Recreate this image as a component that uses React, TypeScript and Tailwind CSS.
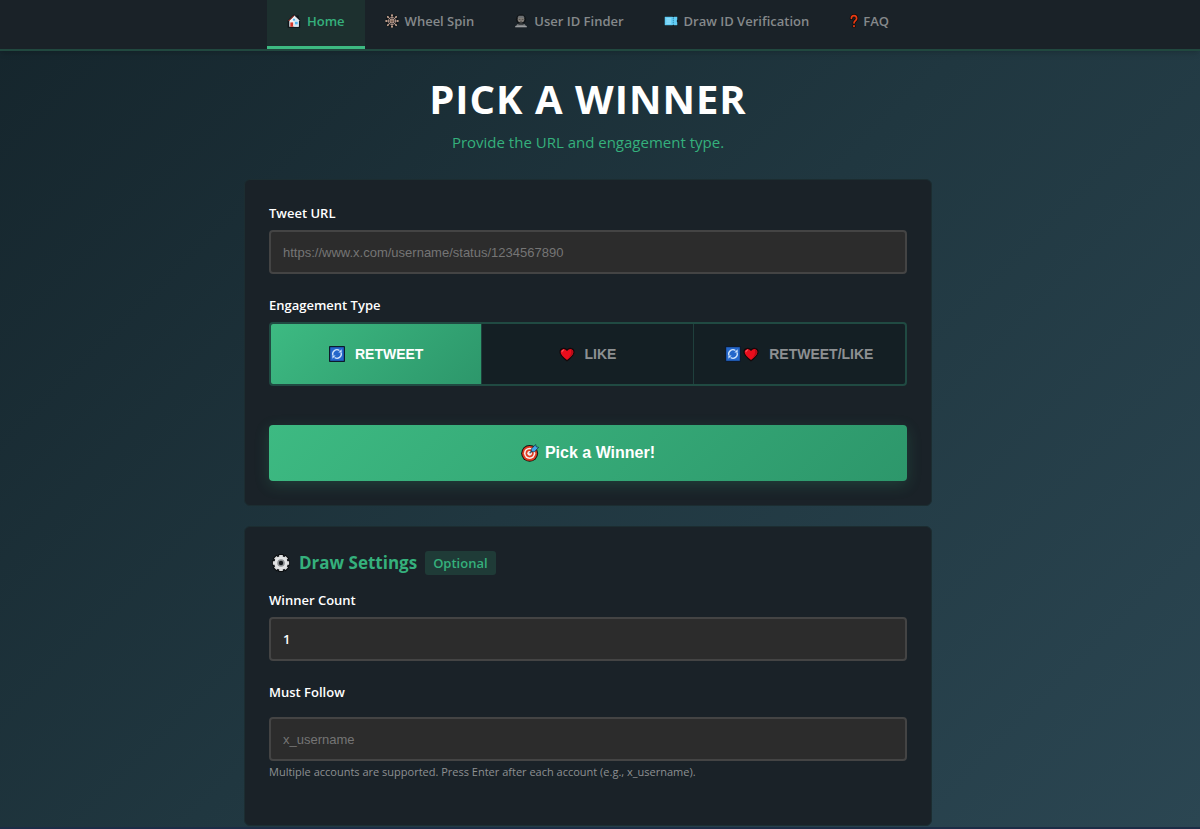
import { useState, type ReactNode } from 'react';
import clsx from 'clsx';

type IconProps = { className?: string };
type Engagement = 'retweet' | 'like' | 'both';

function HouseIcon({ className }: IconProps) {
  return (
    <svg viewBox="0 0 16 16" className={className} aria-hidden="true">
      <path d="M8 .2 .8 7.4V15.6H15V6.4L13.4 4.6V1.6H10.6V2.8Z" fill="#10151a" />
      <path d="M8 2.6 2.6 7.8V14.6H13.4V7.6Z" fill="#eef1f4" />
      <path d="M8.2 8.4 10.6 5l2.8 2.6v7H8.2Z" fill="#d5e5f1" />
      <path d="M8 2.2 14 7.8" stroke="#f3f5f7" strokeWidth="1.2" />
      <path d="M1.8 8 8 1.8" stroke="#c53a2e" strokeWidth="1.1" />
      <rect x="3.8" y="9.6" width="3.2" height="5" fill="#d3372b" />
      <rect x="9.2" y="9" width="3" height="2.8" fill="#4fb3ee" />
      <rect x="6.8" y="5.4" width="2.4" height="2.2" fill="#4fb3ee" />
    </svg>
  );
}

function WheelIcon({ className }: IconProps) {
  return (
    <svg viewBox="0 0 16 16" className={className} aria-hidden="true">
      <circle cx="8" cy="8" r="7.6" fill="#14181b" />
      <g stroke="#b3968a" strokeWidth="1.1" fill="none">
        <circle cx="8" cy="8" r="4.2" strokeWidth="1" />
        <path d="M8 1v14M1 8h14M3 3l10 10M13 3 3 13" />
      </g>
      <g fill="#c9a893">
        <circle cx="8" cy="1.4" r="1.1" />
        <circle cx="8" cy="14.6" r="1.1" />
        <circle cx="1.4" cy="8" r="1.1" />
        <circle cx="14.6" cy="8" r="1.1" />
        <circle cx="3.3" cy="3.3" r="1.1" />
        <circle cx="12.7" cy="3.3" r="1.1" />
        <circle cx="3.3" cy="12.7" r="1.1" />
        <circle cx="12.7" cy="12.7" r="1.1" />
        <circle cx="8" cy="8" r="2" />
      </g>
      <circle cx="8" cy="8" r="1" fill="#4a352b" />
    </svg>
  );
}

function DetectiveIcon({ className }: IconProps) {
  return (
    <svg viewBox="0 0 16 16" className={className} aria-hidden="true">
      <circle cx="8" cy="6" r="5.8" fill="#111518" />
      <path d="M2.4 14.6c0-2.8 2-3.8 5.6-3.8s5.6 1 5.6 3.8Z" fill="#7d8082" />
      <circle cx="8" cy="6" r="3.8" fill="#827e79" />
      <path d="M4 4.6h8L10.6 2H5.4Z" fill="#6d7072" />
      <path d="M5.4 6.2h2M8.8 6.2h2M7 8.4h2" stroke="#4b4a48" strokeWidth="1" />
      <path d="M5 11.6h6" stroke="#202426" strokeWidth="1.2" />
      <path d="M1.4 14.4h13.2" stroke="#9a9d9f" strokeWidth="1.6" />
    </svg>
  );
}

function TicketIcon({ className }: IconProps) {
  return (
    <svg viewBox="0 0 16 16" className={className} aria-hidden="true">
      <rect x="0" y="2.4" width="16" height="11.2" rx="1" fill="#12181c" />
      <path d="M.8 3.2h9l.8.8.8-.8h3.8v3.2l-.7 1.6.7 1.6v3.2h-3.8l-.8-.8-.8.8h-9Z" fill="#62cdf5" />
      <path d="M2.6 5.6h5.4M2.6 8h5.4M2.6 10.4h5.4" stroke="#a9e6fb" strokeWidth="1" />
      <path d="M10.6 4.6v7" stroke="#277ca1" strokeDasharray="1.4 .8" />
    </svg>
  );
}

function QuestionIcon({ className }: IconProps) {
  return (
    <svg viewBox="0 0 10 16" className={className} aria-hidden="true">
      <g fill="none" strokeLinecap="round">
        <path d="M2 5C2 .9 8 .9 8 5 8 7.4 5 7.6 5 10.4" stroke="#0f0d0d" strokeWidth="3.8" />
        <path d="M5 13.8v.1" stroke="#0f0d0d" strokeWidth="3.8" />
        <path d="M2 5C2 .9 8 .9 8 5 8 7.4 5 7.6 5 10.4" stroke="#ea3a12" strokeWidth="1.9" />
        <path d="M5 13.8v.1" stroke="#ea3a12" strokeWidth="2.2" />
      </g>
    </svg>
  );
}

function RepeatIcon({ className }: IconProps) {
  return (
    <svg viewBox="0 0 16 16" className={className} aria-hidden="true">
      <rect width="16" height="16" rx=".8" fill="#0d1a2c" />
      <rect x="1.2" y="1.2" width="13.6" height="13.6" fill="#2467cb" />
      <g stroke="#cfe4fb" strokeWidth="1.3" fill="none">
        <path d="M3.9 9.4A4.3 4.3 0 0 1 10.4 4.5" />
        <path d="M12.1 6.6A4.3 4.3 0 0 1 5.6 11.5" />
      </g>
      <path d="M9.4 6.4h3.2V3.2Z" fill="#cfe4fb" />
      <path d="M6.6 9.6H3.4v3.2Z" fill="#cfe4fb" />
    </svg>
  );
}

function HeartIcon({ className }: IconProps) {
  return (
    <svg viewBox="0 0 16 16" className={className} aria-hidden="true">
      <path
        d="M8 14.8C4.6 12.2 1 9.4 1 6 1 2 6 1.4 8 4.2c2-2.8 7-2.2 7 1.8 0 3.4-3.6 6.2-7 8.8Z"
        fill="#ea0d1c"
        stroke="#14080a"
        strokeWidth="1.2"
      />
      <path d="M8 13.8c3-2.3 6.2-4.9 6.2-7.8 0-1.7-1.2-2.6-2.4-2.7C13 7.4 11 11 8 13.8Z" fill="#b80c18" />
      <path d="M3 5.8c0-1.2.8-1.8 1.7-1.8" stroke="#ff6b72" strokeWidth="1" fill="none" strokeLinecap="round" />
    </svg>
  );
}

function TargetIcon({ className }: IconProps) {
  return (
    <svg viewBox="0 0 20 20" className={className} aria-hidden="true">
      <circle cx="9.6" cy="10.4" r="9.4" fill="#171010" />
      <circle cx="9.6" cy="10.4" r="8.3" fill="#df3d22" />
      <circle cx="9.6" cy="10.4" r="6.3" fill="#f6eeec" />
      <circle cx="9.6" cy="10.4" r="4.5" fill="#df3d22" />
      <circle cx="9.6" cy="10.4" r="2.6" fill="#f6eeec" />
      <path d="M9.6 10.4 14.4 5.6" stroke="#4b5a66" strokeWidth="1.6" />
      <path d="M11.4 5.6 16.2.6l.7 2.5 2.7.7-4.8 5-3.4-.4Z" fill="#42a5ea" stroke="#101c26" strokeWidth=".7" />
    </svg>
  );
}

function GearIcon({ className }: IconProps) {
  return (
    <svg viewBox="0 0 18 18" className={className} aria-hidden="true">
      <g stroke="#0c0f11" strokeWidth="5.6">
        <path d="M9 0v18M0 9h18M2.6 2.6l12.8 12.8M15.4 2.6 2.6 15.4" />
      </g>
      <g stroke="#d9dadb" strokeWidth="3.6">
        <path d="M9 .9v16.2M.9 9h16.2M3.3 3.3l11.4 11.4M14.7 3.3 3.3 14.7" />
      </g>
      <circle cx="9" cy="9" r="6.8" fill="#e2e3e4" />
      <circle cx="9" cy="9" r="3.8" fill="#8e9193" />
      <circle cx="9" cy="9" r="2.2" fill="#14181b" />
    </svg>
  );
}

const NAV_ITEMS = [
  { label: 'Home', Icon: HouseIcon, active: true },
  { label: 'Wheel Spin', Icon: WheelIcon },
  { label: 'User ID Finder', Icon: DetectiveIcon },
  { label: 'Draw ID Verification', Icon: TicketIcon },
  { label: 'FAQ', Icon: QuestionIcon, narrow: true },
];

const ENGAGEMENT_OPTIONS: { value: Engagement; label: string; icons: ReactNode }[] = [
  { value: 'retweet', label: 'RETWEET', icons: <RepeatIcon className="size-4" /> },
  { value: 'like', label: 'LIKE', icons: <HeartIcon className="size-4" /> },
  {
    value: 'both',
    label: 'RETWEET/LIKE',
    icons: (
      <>
        <RepeatIcon className="size-4" />
        <HeartIcon className="size-4" />
      </>
    ),
  },
];

const labelClass = 'block text-[13px] leading-[18px] font-semibold text-white';
const inputClass =
  'block h-11 w-full rounded border-2 border-[#444] bg-[#2c2c2c] px-3 text-[13px] text-white placeholder:text-[#757575] outline-none focus:border-[#3dba82]';
const cardClass = 'rounded-md border border-[#1c2d31] bg-[#1a2228] p-6';

export default function App() {
  const [engagement, setEngagement] = useState<Engagement>('retweet');
  const [winnerCount, setWinnerCount] = useState('1');

  return (
    <div className="flex min-h-screen flex-col bg-linear-135 from-[#15252c] via-[#203740] to-[#2b4652] font-['Open_Sans',sans-serif]">
      <nav className="flex justify-center border-b-2 border-[#21483f] bg-[#1a2228] pr-6 shadow-md">
        {NAV_ITEMS.map(({ label, Icon, active, narrow }) => (
          <a
            key={label}
            href="#"
            className={clsx(
              'flex items-center border-b-3 px-5 pt-[9px] pb-[13px] text-[13px] leading-6 font-semibold',
              narrow ? 'gap-1' : 'gap-1.5',
              active ? 'border-[#3dba82] bg-[#1d302f] text-[#35b07c]' : 'border-transparent text-[#85898b]'
            )}
          >
            <Icon className={narrow ? 'h-3.5 w-2.5' : 'size-3.5'} />
            {label}
          </a>
        ))}
      </nav>

      <main className="pr-6">
        <div className="mx-auto max-w-[688px]">
          <header className="pt-6 pb-6.5 text-center">
            <h1 className="text-[40px] leading-12 font-bold tracking-wide text-white">PICK A WINNER</h1>
            <p className="mt-2 text-[15px] leading-[22px] text-[#35b07c]">Provide the URL and engagement type.</p>
          </header>

          <section className={cardClass}>
            <label htmlFor="tweet-url" className={clsx(labelClass, 'mb-2')}>
              Tweet URL
            </label>
            <input
              id="tweet-url"
              type="url"
              placeholder="https://www.x.com/username/status/1234567890"
              className={clsx(inputClass, "font-['Liberation_Sans',sans-serif]")}
            />

            <div id="engagement-label" className={clsx(labelClass, 'mt-[22px] mb-2')}>
              Engagement Type
            </div>
            <div
              role="group"
              aria-labelledby="engagement-label"
              className="grid h-16 grid-cols-3 overflow-hidden rounded border-2 border-[#204a42] bg-[#141f24]"
            >
              {ENGAGEMENT_OPTIONS.map(({ value, label, icons }) => (
                <button
                  key={value}
                  type="button"
                  aria-pressed={engagement === value}
                  onClick={() => setEngagement(value)}
                  className={clsx(
                    "flex items-center justify-center gap-2.5 border-r border-[#1f3f3c] font-['Liberation_Sans',sans-serif] text-sm font-bold last:border-r-0",
                    engagement === value
                      ? 'bg-linear-135 from-[#3dba82] to-[#2d976b] text-white'
                      : 'text-[#8d9092]'
                  )}
                >
                  <span className="flex gap-0.5">{icons}</span>
                  {label}
                </button>
              ))}
            </div>

            <button
              type="button"
              className="mt-[39px] flex h-14 w-full items-center justify-center gap-1.5 rounded bg-linear-135 from-[#3dba82] to-[#2d976b] font-['Liberation_Sans',sans-serif] text-base font-bold text-white shadow-[0_4px_15px_rgba(61,186,130,0.2)]"
            >
              <TargetIcon className="size-[18px]" />
              Pick a Winner!
            </button>
          </section>

          <section className={clsx(cardClass, 'mt-5')}>
            <div className="mb-4 flex h-6 items-center">
              <GearIcon className="mx-[3px] size-[18px]" />
              <h2 className="ml-1.5 text-[17px] leading-6 font-bold text-[#35b07c]">Draw Settings</h2>
              <span className="ml-2 rounded-[3px] bg-[#1f3b37] px-2 text-[13px] leading-6 font-semibold text-[#35b07c]">
                Optional
              </span>
            </div>

            <label htmlFor="winner-count" className={clsx(labelClass, 'mb-2')}>
              Winner Count
            </label>
            <input
              id="winner-count"
              type="text"
              inputMode="numeric"
              value={winnerCount}
              onChange={(e) => setWinnerCount(e.target.value)}
              className={clsx(inputClass, 'font-semibold')}
            />

            <label htmlFor="must-follow" className={clsx(labelClass, 'mt-[22px] mb-4')}>
              Must Follow
            </label>
            <input
              id="must-follow"
              type="text"
              placeholder="x_username"
              className={clsx(inputClass, "font-['Liberation_Sans',sans-serif]")}
            />
            <p className="mb-[18px] text-[11px] leading-[22px] text-[#8d9092]">
              Multiple accounts are supported. Press Enter after each account (e.g., x_username).
            </p>
          </section>
        </div>
      </main>

      <footer className="mt-px min-h-0.5 grow bg-[#1c2d46]" />
    </div>
  );
}
